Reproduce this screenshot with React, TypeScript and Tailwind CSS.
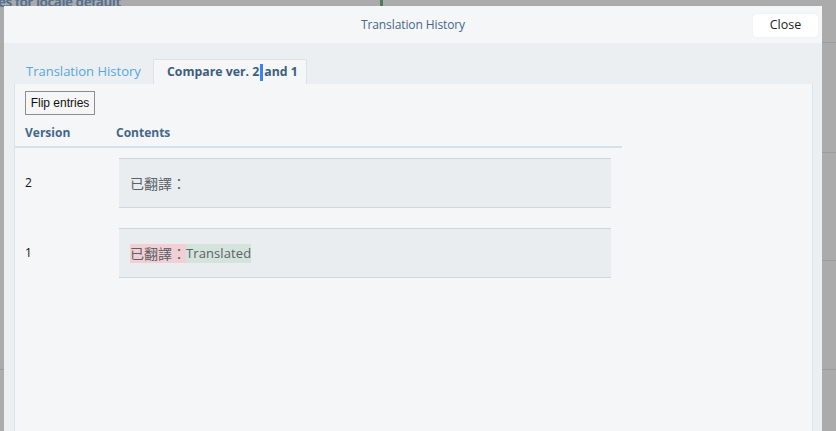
import React from "react";

const sans = { fontFamily: '"Open Sans", "Noto Sans CJK TC", sans-serif' };

export default function App() {
  return (
    <div className="relative w-[836px] h-[431px] overflow-hidden bg-[#ababab]" style={sans}>
      {/* dimmed page behind overlay */}
      <div className="absolute left-[-2px] top-[-7px] text-[13.5px] tracking-[-0.5px] font-bold text-[#56718f] leading-[18px]">
        es for locale default
      </div>
      <div className="absolute left-[380px] top-0 w-[3px] h-[6px] bg-[#4e7a5c]" />
      <div className="absolute left-[822px] top-[42px] w-[14px] h-px bg-[#9c9c9c]" />
      <div className="absolute left-[822px] top-[152px] w-[14px] h-px bg-[#9c9c9c]" />
      <div className="absolute left-[822px] top-[260px] w-[14px] h-px bg-[#9c9c9c]" />
      <div className="absolute left-[822px] top-[369px] w-[14px] h-px bg-[#9c9c9c]" />
      <div className="absolute left-0 top-[369px] w-[4px] h-px bg-[#9c9c9c]" />

      {/* modal */}
      <div className="absolute left-[4px] top-[6px] w-[818px] bottom-0 flex flex-col">
        <div className="relative h-[37px] bg-[#f4f6f8] flex items-center justify-center shrink-0">
          <span className="text-[12px] tracking-[-0.1px] text-[#46678a]">Translation History</span>
          <button className="absolute right-[4px] top-[8px] w-[65px] h-[23px] bg-white rounded-[3px] shadow-[0_0_1px_rgba(0,0,0,0.15)] text-[12.5px] text-[#222]">
            Close
          </button>
        </div>
        <div className="flex-1 flex flex-col bg-[#ebeff2] pl-[10px] pr-[9px] pt-[16px]">
          <div className="flex items-end h-[25px] shrink-0">
            <div className="w-[139px] h-[24px] pl-[12px] flex items-center text-[13px] text-[#55a6de]">
              Translation History
            </div>
            <div className="relative w-[154px] h-[25px] pl-[13px] flex items-center bg-[#f4f6f8] border border-b-0 border-[#dce2e7] rounded-t-[2px] text-[12.3px] font-bold text-[#3f5e7e]">
              <span>Compare ver. 2</span>
              <span className="inline-block w-[3px] h-[17px] bg-[#3b82f6] mx-[1px]" />
              <span>and 1</span>
            </div>
          </div>
          <div className="flex-1 bg-[#f4f6f8] border-l border-r border-[#dce2e7]">
            <div className="pl-[10px] pt-[5px]">
              <button
                className="w-[70px] h-[24px] border border-[#8c8c8c] bg-[#f6f6f6] text-[12px] text-[#111]"
                style={{ fontFamily: '"Liberation Sans", sans-serif' }}
              >
                Flip entries
              </button>
            </div>
            <div className="w-[607px] mt-[4px]">
              <div className="flex h-[29px] items-center border-b-2 border-[#d9e1e8] text-[12px] font-bold text-[#45668a]">
                <div className="w-[93px] pl-[10px]">Version</div>
                <div className="pl-[8px]">Contents</div>
              </div>
              {[
                { v: "2", diff: false },
                { v: "1", diff: true },
              ].map((r) => (
                <div key={r.v} className="flex items-center py-[10px]">
                  <div className="w-[93px] pl-[10px] text-[12px] text-[#111] font-medium">{r.v}</div>
                  <div className="ml-[11px] w-[492px] h-[50px] bg-[#e9edf0] border-t border-b border-[#cfd7de] flex items-center pl-[11px] text-[14px] text-[#5a6167]">
                    {r.diff ? (
                      <span className="flex items-center leading-[19px]">
                        <span className="bg-[#f1cfd4]">已翻譯：</span>
                        <span className="bg-[#d4e4dc] text-[13px] tracking-[0.1px]">Translated</span>
                      </span>
                    ) : (
                      <span>已翻譯：</span>
                    )}
                  </div>
                </div>
              ))}
            </div>
          </div>
        </div>
      </div>
    </div>
  );
}
